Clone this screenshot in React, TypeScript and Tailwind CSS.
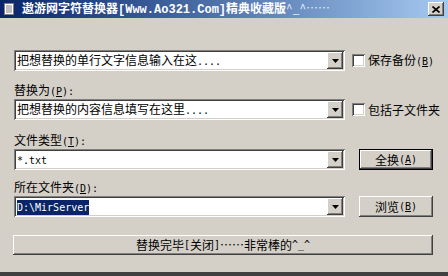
import React from 'react';

// Classic Win2000 3D edges
const sunken =
  'shadow-[inset_1px_1px_0_#808080,inset_-1px_-1px_0_#ffffff,inset_2px_2px_0_#404040,inset_-2px_-2px_0_#d4d0c8]';
const raised =
  'shadow-[inset_-1px_-1px_0_#404040,inset_1px_1px_0_#ffffff,inset_-2px_-2px_0_#808080,inset_2px_2px_0_#d4d0c8]';

/** Half-width ASCII run, 6px per char like SimSun 12px. */
function A({ children, className = '' }: { children: React.ReactNode; className?: string }) {
  return <span className={`font-['DejaVu_Sans_Mono',monospace] text-[10px] ${className}`}>{children}</span>;
}

function DropArrow() {
  return (
    <div className={`flex h-[17px] w-[16px] shrink-0 items-center justify-center bg-[#d4d0c8] ${raised}`}>
      <svg width="7" height="4" viewBox="0 0 7 4">
        <path d="M0 0h7L3.5 4z" fill="#000" />
      </svg>
    </div>
  );
}

function Combo({ children }: { children: React.ReactNode }) {
  return (
    <div className={`flex h-[21px] w-[331px] items-center bg-white pl-[3px] pr-[2px] ${sunken}`}>
      <div className="flex-1 whitespace-nowrap text-[12px] leading-[16px]">{children}</div>
      <DropArrow />
    </div>
  );
}

function Check({ label }: { label: React.ReactNode }) {
  return (
    <div className="ml-[7px] flex items-center gap-[3px] text-[12px] leading-[16px]">
      <div className={`h-[13px] w-[13px] bg-white ${sunken}`} />
      <span className="whitespace-nowrap">{label}</span>
    </div>
  );
}

function Btn({ children, isDefault }: { children: React.ReactNode; isDefault?: boolean }) {
  return (
    <div className={`ml-[14px] h-[21px] w-[74px] ${isDefault ? 'border border-black' : ''}`}>
      <div className={`flex h-full w-full items-center justify-center bg-[#d4d0c8] text-[12px] leading-[16px] ${raised}`}>
        {children}
      </div>
    </div>
  );
}

function Label({ text, k }: { text: string; k: string }) {
  return (
    <div className="h-[14px] text-[12px] leading-[14px]">
      {text}
      <A>
        (<span className="underline">{k}</span>):
      </A>
    </div>
  );
}

export default function App() {
  return (
    <div className="flex h-[276px] w-[448px] flex-col overflow-hidden bg-[#d4d0c8] font-['Noto_Sans_CJK_SC','Liberation_Sans',sans-serif] text-black">
      {/* title bar */}
      <div className="flex h-[18px] items-center bg-gradient-to-r from-[#0a246a] to-[#a6caf0] pl-[4px] pr-[4px]">
        <svg width="10" height="12" viewBox="0 0 10 12">
          <rect x="0.5" y="0.5" width="9" height="11" fill="#fff" stroke="#808080" />
          <path d="M2 3h6M2 5h6M2 7h6M2 9h6" stroke="#808080" />
        </svg>
        <div className="ml-[8px] flex-1 whitespace-nowrap text-[12px] font-bold leading-[16px] text-white">
          遨游网字符替换器
          <span className="font-['Liberation_Mono',monospace]">[Www.Ao321.Com]</span>
          精典收藏版
          <span className="font-normal text-[#e4ecf8]">^_^……</span>
        </div>
        <div className={`flex h-[14px] w-[16px] items-center justify-center bg-[#d4d0c8] ${raised}`}>
          <svg width="8" height="7" viewBox="0 0 8 7">
            <path d="M0.5 0.5l7 6M7.5 0.5l-7 6" stroke="#000" strokeWidth="1.6" />
          </svg>
        </div>
      </div>

      {/* body */}
      <div className="flex flex-1 flex-col pl-[14px] pt-[32px]">
        <div className="flex items-center">
          <Combo>
            把想替换的单行文字信息输入在这<A>....</A>
          </Combo>
          <Check
            label={
              <>
                保存备份
                <A>
                  (<span className="underline">B</span>)
                </A>
              </>
            }
          />
        </div>

        <div className="mt-[12px]">
          <Label text="替换为" k="P" />
        </div>
        <div className="mt-[2px] flex items-center">
          <Combo>
            把想替换的内容信息填写在这里<A>....</A>
          </Combo>
          <Check label="包括子文件夹" />
        </div>

        <div className="mt-[13px]">
          <Label text="文件类型" k="T" />
        </div>
        <div className="mt-[2px] flex items-center">
          <Combo>
            <A>*.txt</A>
          </Combo>
          <Btn isDefault>
            全换
            <A>
              (<span className="underline">A</span>)
            </A>
          </Btn>
        </div>

        <div className="mt-[10px]">
          <Label text="所在文件夹" k="D" />
        </div>
        <div className="mt-[2px] flex items-center">
          <Combo>
            <A className="bg-[#0a246a] py-[2px] text-white">D:\MirServer</A>
          </Combo>
          <Btn>
            浏览
            <A>
              (<span className="underline">B</span>)
            </A>
          </Btn>
        </div>

        <div
          className={`-ml-[1px] mt-[18px] flex h-[20px] w-[420px] items-center justify-center bg-[#d4d0c8] text-[12px] leading-[16px] ${raised}`}
        >
          替换完毕<A>[</A>关闭<A>]</A>……非常棒的<A>^_^</A>
        </div>
      </div>
      <div className="h-[4px] bg-[#404040]" />
    </div>
  );
}
